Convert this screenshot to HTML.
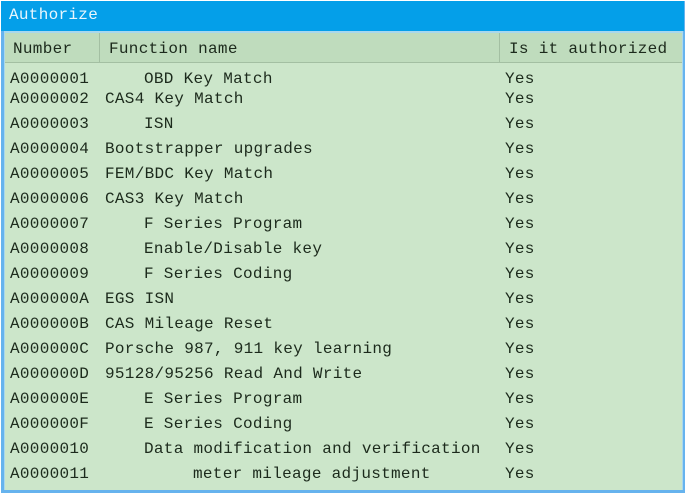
<!DOCTYPE html>
<html><head><meta charset="utf-8">
<style>
html,body{margin:0;padding:0;background:#fff}
#w{position:relative;width:686px;height:494px;overflow:hidden;background:#fff;font-family:"Liberation Mono",monospace;font-size:16px;letter-spacing:.3px;color:#1c2a1c}
#w div{position:absolute;white-space:pre;line-height:16px}
.b{background:#cce6ca}
</style></head><body>
<div id="w">
<div style="left:1px;top:1px;width:684px;height:492px;background:#66b3ee"></div>
<div style="left:1px;top:1px;width:683px;height:30px;background:#049fe9"></div>
<div style="left:4px;top:31px;width:679px;height:459px;background:#a9d8ec"></div>
<div class="b" style="left:5px;top:33px;width:677px;height:457px"></div>
<div style="left:5px;top:33px;width:677px;height:29px;background:#bfdcbd"></div>
<div style="left:5px;top:62px;width:677px;height:1px;background:#a3bfa2"></div>
<div style="left:99px;top:33px;width:1px;height:29px;background:#a3bfa2"></div>
<div style="left:499px;top:33px;width:1px;height:29px;background:#a3bfa2"></div>
<div style="left:9px;top:7px;color:#e8f6fd">Authorize</div>
<div style="left:13px;top:41px">Number</div>
<div style="left:109px;top:41px">Function name</div>
<div style="left:509px;top:41px">Is it authorized</div>

<div style="left:10px;top:71px">A0000001</div><div style="left:144px;top:71px">OBD Key Match</div><div style="left:505px;top:71px">Yes</div>
<div style="left:10px;top:91px">A0000002</div><div style="left:105px;top:91px">CAS4 Key Match</div><div style="left:505px;top:91px">Yes</div>
<div style="left:10px;top:116px">A0000003</div><div style="left:144px;top:116px">ISN</div><div style="left:505px;top:116px">Yes</div>
<div style="left:10px;top:141px">A0000004</div><div style="left:105px;top:141px">Bootstrapper upgrades</div><div style="left:505px;top:141px">Yes</div>
<div style="left:10px;top:166px">A0000005</div><div style="left:105px;top:166px">FEM/BDC Key Match</div><div style="left:505px;top:166px">Yes</div>
<div style="left:10px;top:191px">A0000006</div><div style="left:105px;top:191px">CAS3 Key Match</div><div style="left:505px;top:191px">Yes</div>
<div style="left:10px;top:216px">A0000007</div><div style="left:144px;top:216px">F Series Program</div><div style="left:505px;top:216px">Yes</div>
<div style="left:10px;top:241px">A0000008</div><div style="left:144px;top:241px">Enable/Disable key</div><div style="left:505px;top:241px">Yes</div>
<div style="left:10px;top:266px">A0000009</div><div style="left:144px;top:266px">F Series Coding</div><div style="left:505px;top:266px">Yes</div>
<div style="left:10px;top:291px">A000000A</div><div style="left:105px;top:291px">EGS ISN</div><div style="left:505px;top:291px">Yes</div>
<div style="left:10px;top:316px">A000000B</div><div style="left:105px;top:316px">CAS Mileage Reset</div><div style="left:505px;top:316px">Yes</div>
<div style="left:10px;top:341px">A000000C</div><div style="left:105px;top:341px">Porsche 987, 911 key learning</div><div style="left:505px;top:341px">Yes</div>
<div style="left:10px;top:366px">A000000D</div><div style="left:105px;top:366px">95128/95256 Read And Write</div><div style="left:505px;top:366px">Yes</div>
<div style="left:10px;top:391px">A000000E</div><div style="left:144px;top:391px">E Series Program</div><div style="left:505px;top:391px">Yes</div>
<div style="left:10px;top:416px">A000000F</div><div style="left:144px;top:416px">E Series Coding</div><div style="left:505px;top:416px">Yes</div>
<div style="left:10px;top:441px">A0000010</div><div style="left:144px;top:441px">Data modification and verification</div><div style="left:505px;top:441px">Yes</div>
<div style="left:10px;top:466px">A0000011</div><div style="left:193px;top:466px">meter mileage adjustment</div><div style="left:505px;top:466px">Yes</div>
</div>
</body></html>
